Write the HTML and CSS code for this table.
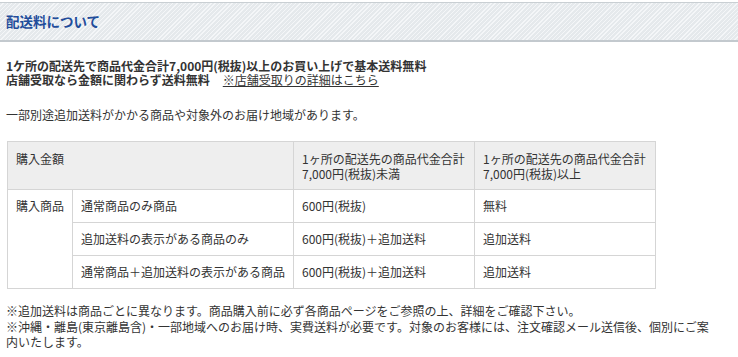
FILE: index.html
```html
<!DOCTYPE html>
<html lang="ja">
<head>
<meta charset="utf-8">
<title>配送料について</title>
<link rel="stylesheet" href="styles.css">
</head>
<body>
<h2 class="section-head">配送料について</h2>
<div class="content">
  <p class="lead">1ケ所の配送先で商品代金合計7,000円(税抜)以上のお買い上げで基本送料無料<br>店舗受取なら金額に関わらず送料無料<a class="lead-link" href="#">※店舗受取りの詳細はこちら</a></p>
  <p class="note">一部別途追加送料がかかる商品や対象外のお届け地域があります。</p>
  <table class="fee-table">
    <colgroup>
      <col class="c1"><col class="c2"><col class="c3"><col class="c4">
    </colgroup>
    <thead>
      <tr>
        <th colspan="2" class="top">購入金額</th>
        <th>1ヶ所の配送先の商品代金合計<br>7,000円(税抜)未満</th>
        <th>1ヶ所の配送先の商品代金合計<br>7,000円(税抜)以上</th>
      </tr>
    </thead>
    <tbody>
      <tr>
        <td rowspan="3" class="top">購入商品</td>
        <td>通常商品のみ商品</td>
        <td>600円(税抜)</td>
        <td>無料</td>
      </tr>
      <tr>
        <td>追加送料の表示がある商品のみ</td>
        <td>600円(税抜)＋追加送料</td>
        <td>追加送料</td>
      </tr>
      <tr>
        <td>通常商品＋追加送料の表示がある商品</td>
        <td>600円(税抜)＋追加送料</td>
        <td>追加送料</td>
      </tr>
    </tbody>
  </table>
  <p class="foot">※追加送料は商品ごとに異なります。商品購入前に必ず各商品ページをご参照の上、詳細をご確認下さい。<br>※沖縄・離島(東京離島含)・一部地域へのお届け時、実費送料が必要です。対象のお客様には、注文確認メール送信後、個別にご案内いたします。</p>
</div>
</body>
</html>
```

FILE: styles.css
```css
html, body {
  margin: 0;
  padding: 0;
  background: #ffffff;
}

body {
  font-family: "Noto Sans CJK JP", "Noto Sans", sans-serif;
  font-size: 12px;
  color: #333333;
}

.section-head {
  margin: 2px 0 0;
  height: 37px;
  padding: 0 6px;
  display: flex;
  align-items: center;
  border-top: 1px solid #c9cfd3;
  border-bottom: 2px solid #c3c9ce;
  background-color: #e7ebee;
  background-image: repeating-linear-gradient(135deg, #e5e9ec 0px, #e5e9ec 2px, #f4f6f8 2px, #f4f6f8 3px);
  font-size: 13.5px;
  font-weight: bold;
  color: #1f4d9b;
  line-height: 1;
}

.content {
  padding: 0 22px 0 6px;
}

.lead {
  margin: 17px 0 0;
  line-height: 14px;
  font-weight: bold;
}

.lead-link {
  margin-left: 13px;
  font-weight: normal;
  color: #333333;
  text-decoration: underline;
}

.note {
  margin: 21px 0 0;
  line-height: 14px;
}

.fee-table {
  margin: 19px 0 0 1px;
  border-collapse: collapse;
  table-layout: fixed;
  width: 649px;
}

.fee-table .c1 { width: 65px; }
.fee-table .c2 { width: 221px; }
.fee-table .c3 { width: 181px; }
.fee-table .c4 { width: 181px; }

.fee-table th,
.fee-table td {
  border: 1px solid #d5d5d5;
  padding: 8px 8px 9px;
  line-height: 15px;
  text-align: left;
  font-weight: normal;
  vertical-align: middle;
}

.fee-table th {
  background: #eeeeee;
  padding: 9px 8px 8px;
  vertical-align: top;
}

.fee-table .top {
  vertical-align: top;
}

.foot {
  margin: 14px 0 0;
  line-height: 15.5px;
}
```
